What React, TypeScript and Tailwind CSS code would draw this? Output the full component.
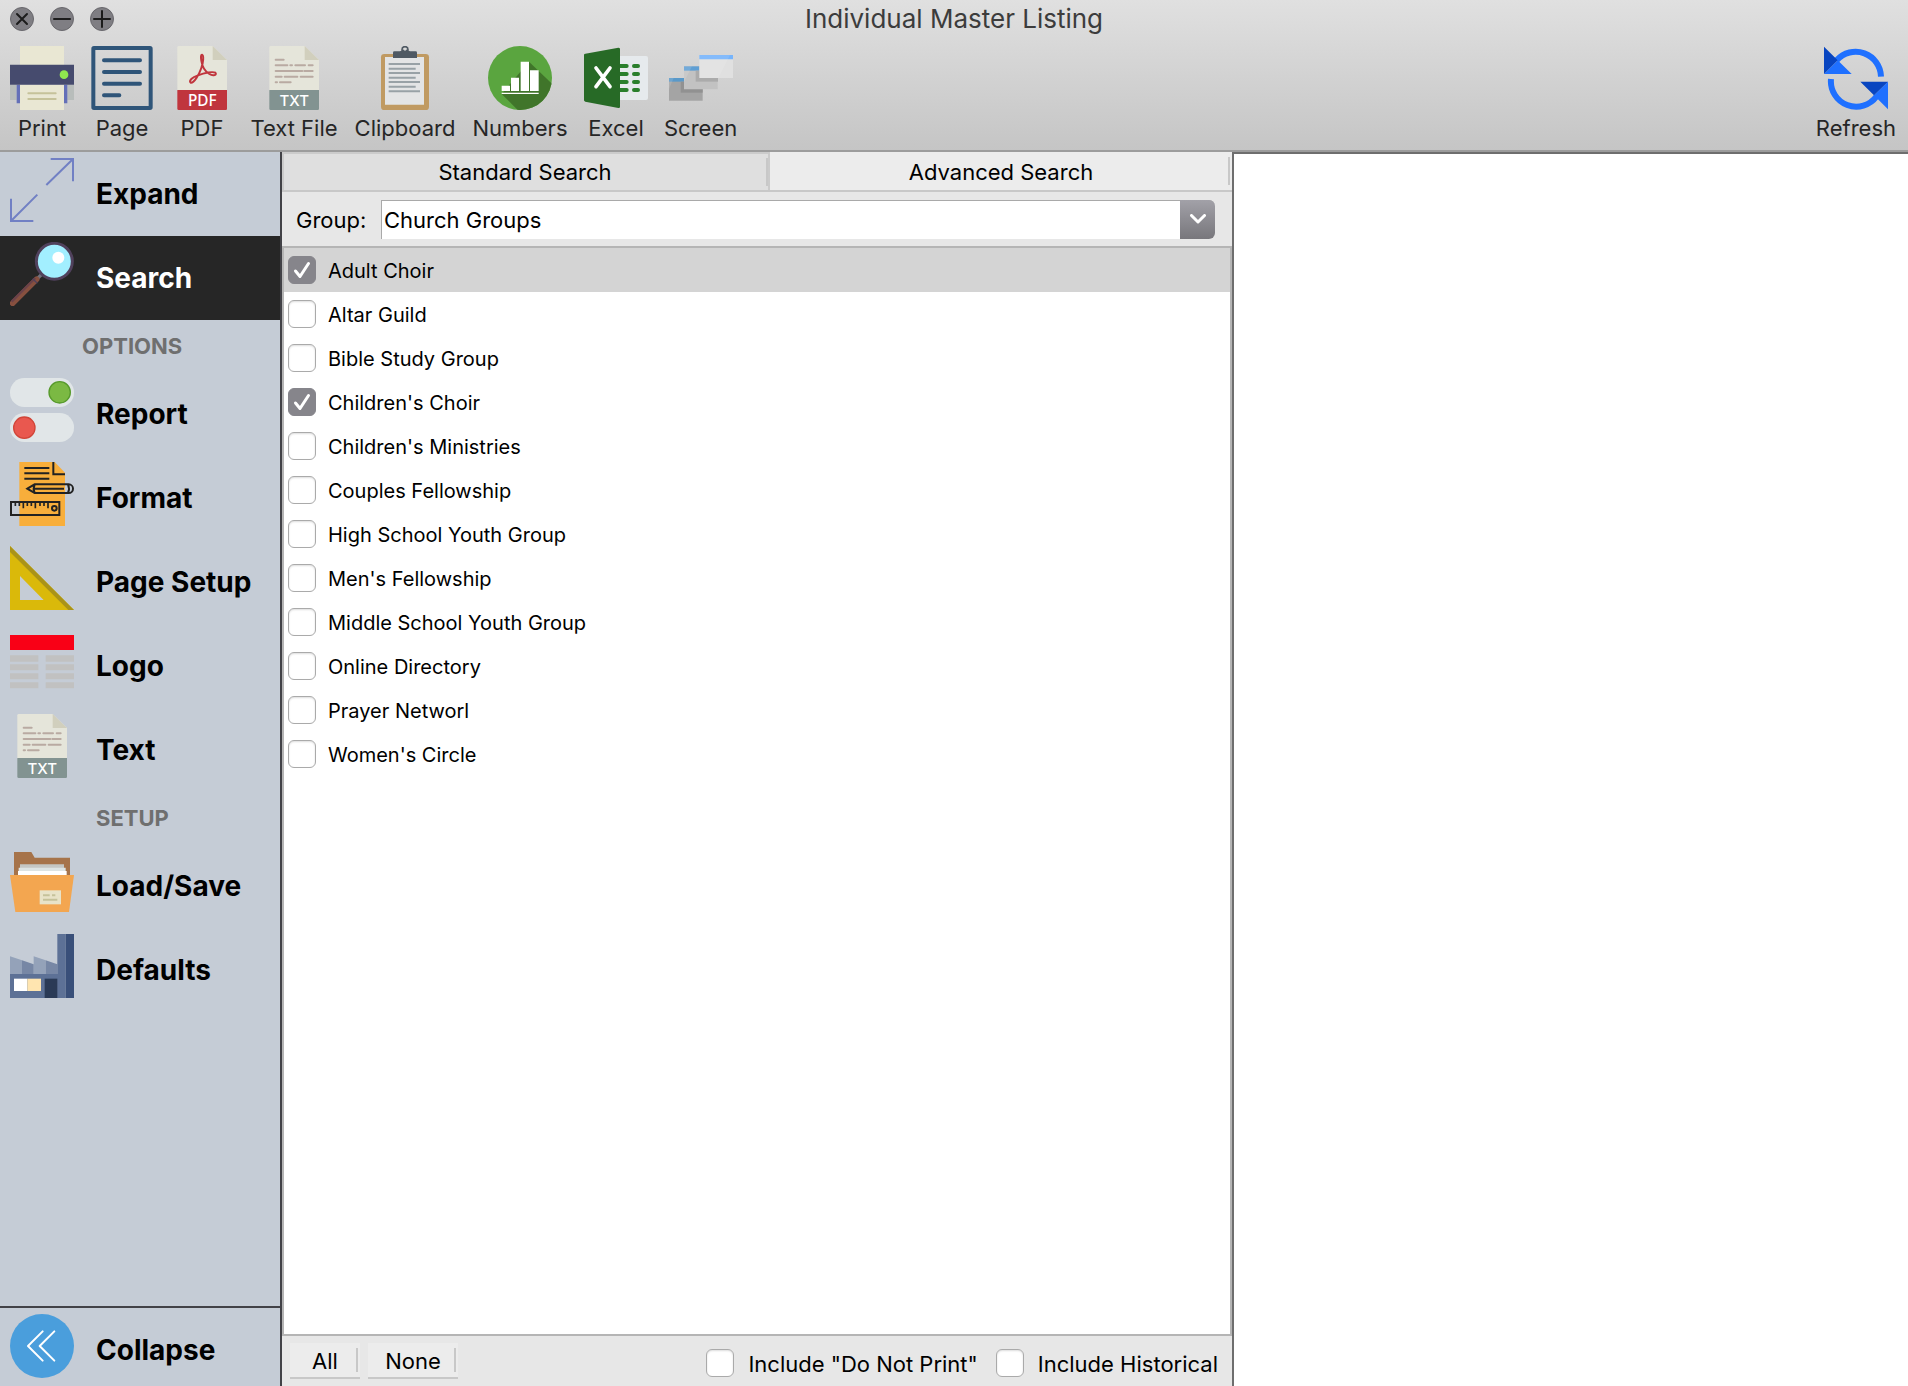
import React from 'react'

type IconProps = { children: React.ReactNode }

function Icon({ children }: IconProps) {
  return (
    <svg viewBox="0 0 192 192" className="size-16 shrink-0" aria-hidden="true">
      {children}
    </svg>
  )
}

const PrintIcon = () => (
  <Icon>
    <path d="M0 116h20v46H0zM172 116h20v46h-20z" fill="#b8bdbb" />
    <path d="M20 116h10v56H20zM162 116h10v56h-10z" fill="#6470b8" />
    <path d="M30 0h132v57H30zM30 116h132v76H30z" fill="#e9e7d3" />
    <path d="M0 56h192v60H0z" fill="#464b6e" />
    <circle cx="162" cy="86" r="13" fill="#8fe84f" />
    <path d="M55 142h82M55 159h82" stroke="#c5c29a" strokeWidth="6" strokeLinecap="round" />
  </Icon>
)

const PageIcon = () => (
  <Icon>
    <rect x="10" y="6" width="172" height="180" rx="2" fill="none" stroke="#2f5579" strokeWidth="12" />
    <path d="M42 43h108M42 78h108M42 113h108M42 148h46" stroke="#2f5579" strokeWidth="12" strokeLinecap="round" />
  </Icon>
)

const PdfIcon = () => (
  <Icon>
    <path d="M22 4q0-4 4-4h102l43 42v92H22z" fill="#e5e5da" />
    <path d="M128 0l43 42h-43z" fill="#d1cfbd" />
    <path d="M22 132h149v56q0 4-4 4H26q-4 0-4-4z" fill="#c0353d" />
    <path
      d="M62 110C56 104 66 94 84 88C104 80 128 76 136 80C142 86 130 92 118 84C104 76 96 58 94 44C92 32 93 26 96 26C102 28 100 48 94 66C88 84 72 112 62 110Z"
      fill="none"
      stroke="#c0353d"
      strokeWidth="6"
    />
    <text x="97" y="181" textAnchor="middle" fontSize="46" fontWeight="500" fill="#fff" className="font-['Noto_Sans',sans-serif]">
      PDF
    </text>
  </Icon>
)

const TxtIcon = () => (
  <Icon>
    <path d="M22 4q0-4 4-4h102l43 42v92H22z" fill="#e5e5da" />
    <path d="M128 0l43 42h-43z" fill="#d1cfbd" />
    <path d="M22 132h149v56q0 4-4 4H26q-4 0-4-4z" fill="#829391" />
    <path
      d="M41 41h24M41 58h35M85 58h5M100 58h29M140 58h12M41 75h80M127 75h25M41 92h18M68 92h38M116 92h36M41 109h4M54 109h32"
      stroke="#b9aaa2"
      strokeWidth="6"
      strokeLinecap="round"
    />
    <text x="97" y="180" textAnchor="middle" fontSize="45" fontWeight="500" fill="#fff" className="font-['Inter',sans-serif]">
      TXT
    </text>
  </Icon>
)

const ClipboardIcon = () => (
  <Icon>
    <rect x="24" y="24" width="144" height="168" rx="10" fill="#c09a62" />
    <path d="M36 33h117v143H36z" fill="#e3e4e5" />
    <circle cx="96" cy="11" r="9" fill="none" stroke="#4f5963" strokeWidth="5" />
    <path d="M60 20q0-4 4-4h16q8 0 12-6h8q4 6 12 6h16q4 0 4 4v16H60z" fill="#4f5963" />
    <circle cx="96" cy="10" r="4" fill="#d8d8d8" />
    <path
      d="M47 54h94M47 68h81M47 81h94M47 95h81M47 108h94M47 122h81M47 136h94"
      stroke="#98a1a6"
      strokeWidth="6"
    />
  </Icon>
)

const NumbersIcon = () => (
  <Icon>
    <defs>
      <clipPath id="numbers-disc">
        <circle cx="96" cy="96" r="96" />
      </clipPath>
    </defs>
    <circle cx="96" cy="96" r="96" fill="#5aa53f" />
    <path d="M123 47l77 74v79H97l-56-56z" fill="#40752a" clipPath="url(#numbers-disc)" />
    <path d="M41 119h25v16H41zM69 95h24v40H69zM98 47h25v88H98zM126 73h26v62h-26zM41 140h111v4H41z" fill="#fff" />
  </Icon>
)

const ExcelIcon = () => (
  <Icon>
    <rect x="90" y="30" width="102" height="132" rx="6" fill="#e6eaed" />
    <path d="M107 60h21M107 84h21M107 108h21M107 132h21" stroke="#2a7f2c" strokeWidth="12" strokeLinecap="round" />
    <path d="M150 60h12M150 84h12M150 108h12M150 132h12" stroke="#2a7f2c" strokeWidth="12" strokeLinecap="round" />
    <path d="M0 27q0-4 4-4L103 5q5 0 5 4v173q0 5-5 4L4 167q-4-1-4-4z" fill="#276a26" />
    <path d="M36 66l42 56M78 66l-42 56" stroke="#fff" strokeWidth="11" strokeLinecap="round" />
  </Icon>
)

const ScreenIcon = () => (
  <Icon>
    <path d="M0 96h101v68H0z" fill="#a4a4a4" />
    <path d="M0 96h45v11H0z" fill="#5a99c9" />
    <path d="M0 96h14L0 130z" fill="#fff" opacity=".12" />
    <path d="M35 107h66v33H35z" fill="#919191" />
    <path d="M45 61h101v69H45z" fill="#c2c2c2" />
    <path d="M45 61h46v13H45z" fill="#5f9fd4" />
    <path d="M45 61h24L45 108z" fill="#fff" opacity=".12" />
    <path d="M80 74h67v33H80z" fill="#ababab" />
    <path d="M91 27h101v69H91z" fill="#e0e0e0" />
    <path d="M91 27h101v13H91z" fill="#76b4fb" />
    <path d="M91 27h92l-35 69H91z" fill="#fff" opacity=".1" />
  </Icon>
)

const RefreshIcon = () => (
  <Icon>
    <path d="M38 43A76 76 0 0 1 171 92" fill="none" stroke="#1f70ff" strokeWidth="18" />
    <path d="M21 99A76 76 0 0 0 158 151" fill="none" stroke="#1f70ff" strokeWidth="18" />
    <path d="M0 84l41-41l42 41zM192 107v83l-42-42z" fill="#1f70ff" />
    <path d="M0 2l41 41L0 84zM109 107h83l-42 41z" fill="#0845c0" />
  </Icon>
)

const ExpandIcon = () => (
  <Icon>
    <path
      d="M122 3h67v67M189 3l-80 78M3 122v67h67M3 189l79-79"
      fill="none"
      stroke="#7180c4"
      strokeWidth="6"
    />
  </Icon>
)

const SearchIcon = () => (
  <Icon>
    <path d="M95 97l-14 14" stroke="#72707c" strokeWidth="10" />
    <path d="M80 112L8 184" stroke="#87503f" strokeWidth="17" strokeLinecap="round" />
    <path d="M76 108L5 179" stroke="#6b4249" strokeWidth="7" />
    <path d="M68 110l14 14" stroke="#50415c" strokeWidth="4" />
    <circle cx="133" cy="58" r="54" fill="#a2efff" stroke="#50415c" strokeWidth="9" />
    <circle cx="145" cy="47" r="18" fill="#fff" />
  </Icon>
)

const ReportIcon = () => (
  <Icon>
    <rect width="192" height="87" rx="43" fill="#e1e6e8" />
    <rect y="105" width="192" height="87" rx="43" fill="#e1e6e8" />
    <circle cx="149" cy="43" r="32" fill="#7bb943" stroke="#579a2c" strokeWidth="4" />
    <circle cx="43" cy="149" r="32" fill="#e9584f" stroke="#d14538" strokeWidth="4" />
  </Icon>
)

const FormatIcon = () => (
  <Icon>
    <path d="M28 0h106l31 32v160H28z" fill="#f8ae3b" />
    <g fill="none" stroke="#222" strokeWidth="6">
      <path d="M130 0v37h35M43 18h75M43 34h75M43 50h75" />
      <path d="M52 80l22-13h102a13 13 0 0 1 0 26H74zM74 80h88M174 67q6 13 0 26M74 67q-6 13 0 26" />
      <path d="M3 120h145v39H3z" />
      <path d="M16 120v12M28 120v12M40 120v19M52 120v12M64 120v12M76 120v19M90 120v12M102 120v12M114 120v19" strokeWidth="5" />
      <circle cx="133" cy="139" r="7" />
    </g>
  </Icon>
)

const PageSetupIcon = () => (
  <Icon>
    <path d="M0 0l192 192H0zM30 90v72h71z" fill="#dab90a" fillRule="evenodd" />
    <path d="M0 0l192 192h-17L0 18z" fill="#aa9319" />
  </Icon>
)

const LogoIcon = () => (
  <Icon>
    <path d="M0 15h192v45H0z" fill="#f90016" />
    <path
      d="M0 76h85v19H0zM0 103h85v18H0zM0 130h85v18H0zM0 157h85v18H0zM107 76h85v19h-85zM107 103h85v18h-85zM107 130h85v18h-85zM107 157h85v18h-85z"
      fill="#c1c1c1"
    />
  </Icon>
)

const FolderIcon = () => (
  <Icon>
    <path d="M12 6h52l10 17h106v57H12z" fill="#a6734a" />
    <path d="M30 43h132v20H30z" fill="#c4c6c3" />
    <path d="M26 53h141v20H26z" fill="#dde4e4" />
    <path d="M24 63h146v14H24z" fill="#fff" />
    <path d="M0 75h192l-15 111H16z" fill="#f3a650" />
    <path d="M89 121h64v42H89z" fill="#e8e3c8" />
    <path d="M99 136h20M126 136h10M99 149h43" stroke="#c5c29a" strokeWidth="6" />
  </Icon>
)

const FactoryIcon = () => (
  <Icon>
    <path d="M0 67l36 12v42H0zM71 67l36 12v42H71z" fill="#94a2b9" />
    <path d="M36 79l35 12v30H36zM107 79l35 12v30h-35z" fill="#7787a5" />
    <path d="M0 120h142V0h25v192H0z" fill="#5d7196" />
    <path d="M167 0h25v192h-25z" fill="#394f79" />
    <path d="M12 134h40v37H12z" fill="#fff" />
    <path d="M52 134h41v37H52z" fill="#ffe5b0" />
    <path d="M104 134h38v58h-38z" fill="#2a3a56" />
  </Icon>
)

const CollapseIcon = () => (
  <Icon>
    <circle cx="96" cy="96" r="96" fill="#4a9edc" />
    <path
      d="M98 52L54 96l44 44M133 52L89 96l44 44"
      fill="none"
      stroke="#fff"
      strokeWidth="6"
      strokeLinecap="round"
      strokeLinejoin="round"
    />
  </Icon>
)

const tools = [
  { label: 'Print', icon: <PrintIcon /> },
  { label: 'Page', icon: <PageIcon /> },
  { label: 'PDF', icon: <PdfIcon /> },
  { label: 'Text File', icon: <TxtIcon />, width: 'w-[88px]' },
  { label: 'Clipboard', icon: <ClipboardIcon />, width: 'w-[102px]' },
  { label: 'Numbers', icon: <NumbersIcon />, width: 'w-24' },
  { label: 'Excel', icon: <ExcelIcon /> },
  { label: 'Screen', icon: <ScreenIcon /> },
]

const options = [
  { label: 'Report', icon: <ReportIcon /> },
  { label: 'Format', icon: <FormatIcon /> },
  { label: 'Page Setup', icon: <PageSetupIcon /> },
  { label: 'Logo', icon: <LogoIcon /> },
  { label: 'Text', icon: <TxtIcon /> },
]

const setup = [
  { label: 'Load/Save', icon: <FolderIcon /> },
  { label: 'Defaults', icon: <FactoryIcon /> },
]

const groups = [
  { name: 'Adult Choir', checked: true },
  { name: 'Altar Guild', checked: false },
  { name: 'Bible Study Group', checked: false },
  { name: "Children's Choir", checked: true },
  { name: "Children's Ministries", checked: false },
  { name: 'Couples Fellowship', checked: false },
  { name: 'High School Youth Group', checked: false },
  { name: "Men's Fellowship", checked: false },
  { name: 'Middle School Youth Group', checked: false },
  { name: 'Online Directory', checked: false },
  { name: 'Prayer Networl', checked: false },
  { name: "Women's Circle", checked: false },
]

const windowButtons = [
  { label: 'Close', d: 'M7 7l10 10M17 7L7 17' },
  { label: 'Minimize', d: 'M4 12h16' },
  { label: 'Zoom', d: 'M4 12h16M12 4v16' },
]

type ItemProps = { label: string; icon: React.ReactNode }

function ToolButton({ label, icon, width = '' }: ItemProps & { width?: string }) {
  return (
    <button
      type="button"
      className={`flex min-w-16 flex-col items-center gap-1 text-[22px] leading-7 whitespace-nowrap text-[#262626] ${width}`}
    >
      {icon}
      {label}
    </button>
  )
}

function SideButton({ label, icon, active }: ItemProps & { active?: boolean }) {
  return (
    <button
      type="button"
      className={`flex h-[84px] w-full items-center gap-[22px] px-2.5 text-left text-[28px] font-bold ${
        active ? 'bg-[#262626] text-white' : 'text-black'
      }`}
    >
      <span className="mt-1.5 self-start">{icon}</span>
      {label}
    </button>
  )
}

function Checkbox({ label, checked = false, small }: { label: string; checked?: boolean; small?: boolean }) {
  return (
    <label className={`flex items-center ${small ? 'gap-3 text-[20px]' : 'gap-3.5 text-[22px]'}`}>
      <span className="relative size-7">
        <input
          type="checkbox"
          defaultChecked={checked}
          className="peer block size-7 appearance-none rounded-md border border-[#aaa] bg-white shadow-[inset_0_1px_2px_#ddd] checked:border-[#86858b] checked:bg-[#86858b] checked:shadow-none"
        />
        <svg viewBox="0 0 28 28" className="pointer-events-none absolute inset-0 hidden size-7 peer-checked:block">
          <path d="M7.500 15l4.500 5.500L20.500 7.500" fill="none" stroke="#fff" strokeWidth="3" strokeLinecap="round" strokeLinejoin="round" />
        </svg>
      </span>
      <span className="pt-0.5">{label}</span>
    </label>
  )
}

function Header() {
  return (
    <header className="h-[152px] border-b-2 border-[#9c9c9c] bg-linear-to-b from-[#e0e0e0] to-[#c5c5c5]">
      <div className="grid h-[38px] grid-cols-[1fr_auto_1fr] items-center px-2.5">
        <div className="flex gap-4">
          {windowButtons.map((b) => (
            <button
              key={b.label}
              type="button"
              aria-label={b.label}
              className="size-6 rounded-full border border-[#68676c] bg-[#7f7e83]"
            >
              <svg viewBox="1 1 22 22" className="size-full">
                <path d={b.d} stroke="#1c1c1c" strokeWidth="2" strokeLinecap="round" />
              </svg>
            </button>
          ))}
        </div>
        <h1 className="text-[26px] leading-8 text-[#3c3c3c]">Individual Master Listing</h1>
      </div>
      <div className="flex gap-4 pt-2 pr-3 pl-2.5">
        {tools.map((t) => (
          <ToolButton key={t.label} {...t} />
        ))}
        <div className="ml-auto">
          <ToolButton label="Refresh" icon={<RefreshIcon />} />
        </div>
      </div>
    </header>
  )
}

function Sidebar() {
  return (
    <nav className="flex flex-col border-r-2 border-[#424247] bg-[#c5ccd6]">
      <SideButton label="Expand" icon={<ExpandIcon />} />
      <SideButton label="Search" icon={<SearchIcon />} active />
      <h2 className="flex h-[52px] items-center pl-[82px] text-[22px] font-bold text-[#6f6f6f]">OPTIONS</h2>
      {options.map((o) => (
        <SideButton key={o.label} {...o} />
      ))}
      <h2 className="flex h-[52px] items-center pl-24 text-[22px] font-bold text-[#6f6f6f]">SETUP</h2>
      {setup.map((o) => (
        <SideButton key={o.label} {...o} />
      ))}
      <div className="mt-auto h-20 overflow-hidden border-t-2 border-[#424247]">
        <SideButton label="Collapse" icon={<CollapseIcon />} />
      </div>
    </nav>
  )
}

function SearchPanel() {
  return (
    <section className="flex flex-col border-r-2 border-[#6e6e6e] bg-[#e7e7e7] text-[22px] text-black">
      <div role="tablist" className="grid h-10 grid-cols-[488fr_462fr] border-b-2 border-[#c8c8c8]">
        <button
          type="button"
          role="tab"
          aria-selected="false"
          className="flex items-center border-t-2 border-r-2 border-l-2 border-[#cbcbcb] bg-[#dfdfdf]"
        >
          <span className="flex-1">Standard Search</span>
          <span className="h-7 w-0.5 bg-[#c8c8c8]" />
        </button>
        <button type="button" role="tab" aria-selected="true" className="flex items-center bg-[#ececec] pr-0.5 pl-1">
          <span className="flex-1 pt-0.5">Advanced Search</span>
          <span className="h-7 w-0.5 bg-[#c8c8c8]" />
        </button>
      </div>
      <div className="flex h-[54px] items-center pr-[17px] pl-3.5">
        <label htmlFor="group" className="w-[85px] pt-0.5">
          Group:
        </label>
        <div className="relative h-[39px] flex-1">
          <select
            id="group"
            className="size-full appearance-none rounded-r-md border-t border-l border-[#a9a9a9] bg-white pt-0.5 pl-0.5"
          >
            <option>Church Groups</option>
          </select>
          <span className="pointer-events-none absolute inset-y-0 right-0 flex w-[35px] items-center justify-center rounded-r-md bg-linear-to-b from-[#a2a1a8] to-[#78777c]">
            <svg viewBox="0 0 16 10" className="h-2.5 w-4">
              <path d="M1.500 1.500L8 8l6.500-6.500" fill="none" stroke="#fff" strokeWidth="3" strokeLinecap="round" strokeLinejoin="round" />
            </svg>
          </span>
        </div>
      </div>
      <ul className="flex-1 border-2 border-[#b5b5b5] bg-white">
        {groups.map((g, i) => (
          <li key={g.name} className={`flex h-11 items-center pl-1 ${i === 0 ? 'bg-[#d4d4d4]' : ''}`}>
            <Checkbox label={g.name} checked={g.checked} small />
          </li>
        ))}
      </ul>
      <div className="flex h-[50px] items-center gap-2 pr-3.5 pl-2">
        <button type="button" className="flex h-9 w-[70px] items-center border-b-2 border-[#c8c8c8] bg-[#ececec] pr-0.5 pl-1">
          <span className="flex-1 pt-0.5">All</span>
          <span className="h-6 w-0.5 bg-[#c8c8c8]" />
        </button>
        <button type="button" className="flex h-9 w-[90px] items-center border-b-2 border-[#c8c8c8] bg-[#ececec] pr-0.5 pl-1">
          <span className="flex-1 pt-0.5">None</span>
          <span className="h-6 w-0.5 bg-[#c8c8c8]" />
        </button>
        <div className="ml-auto flex gap-[18px] pt-1">
          <Checkbox label={'Include "Do Not Print"'} />
          <Checkbox label="Include Historical" />
        </div>
      </div>
    </section>
  )
}

function App() {
  return (
    <div className="flex min-h-screen flex-col bg-white font-['Inter',sans-serif]">
      <Header />
      <div className="grid flex-1 grid-cols-[282px_minmax(0,952fr)_minmax(0,674fr)]">
        <Sidebar />
        <SearchPanel />
        <main className="border-t-2 border-[#6e6e6e] bg-white" />
      </div>
    </div>
  )
}

export default App
